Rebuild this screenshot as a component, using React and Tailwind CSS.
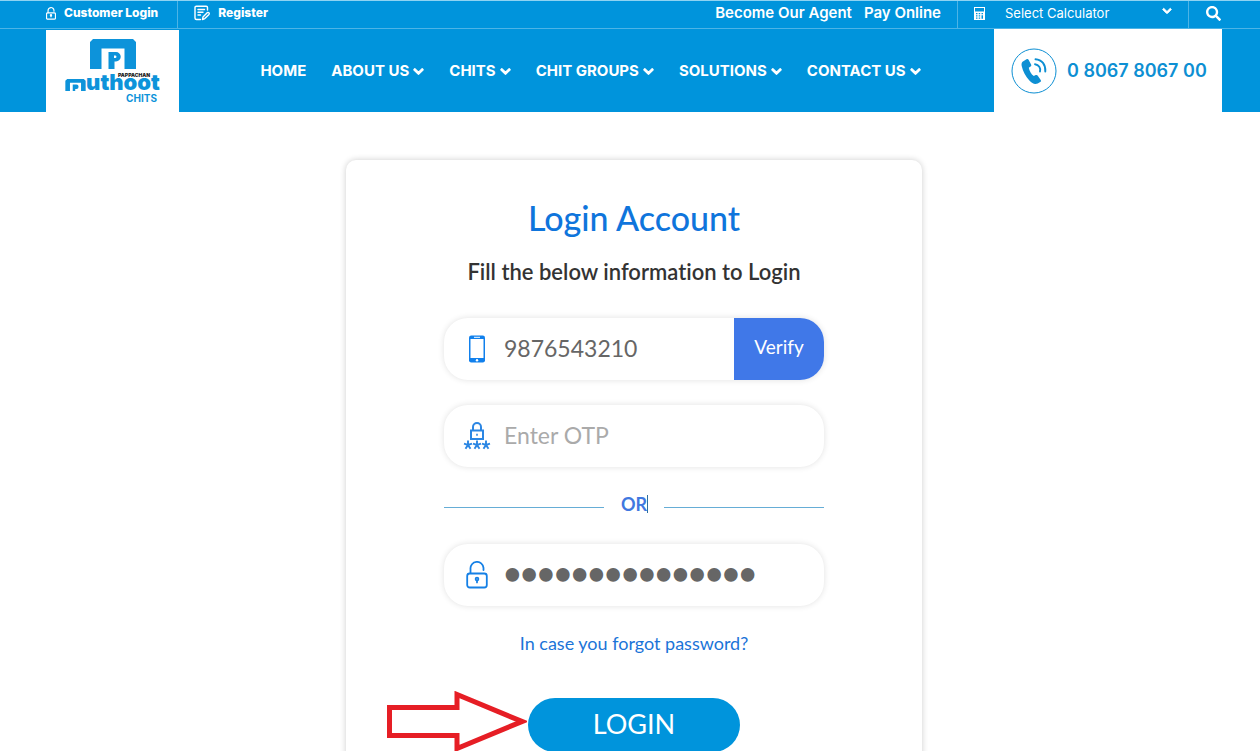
import { useState } from "react";
import { FaChevronDown, FaSearch } from "react-icons/fa";

const menu = [
  { label: "HOME" },
  { label: "ABOUT US", children: true },
  { label: "CHITS", children: true },
  { label: "CHIT GROUPS", children: true },
  { label: "SOLUTIONS", children: true },
  { label: "CONTACT US", children: true },
];

const fieldClass = "flex h-[62px] items-center rounded-[24px] bg-white shadow-[0_0_6px_rgba(0,0,0,0.12)]";

function UnlockIcon({ className }) {
  return (
    <svg viewBox="0 0 22 28" fill="none" stroke="currentColor" strokeLinecap="round" className={className}>
      <path d="M4.5 12V8a6.500 6.500 0 0 1 13-1.200V9" />
      <rect x="1.200" y="12.500" width="19.600" height="14" rx="2.500" />
      <circle cx="11" cy="18" r="1.400" />
      <path d="M11 19.400v2" />
    </svg>
  );
}

function RegisterIcon() {
  return (
    <svg viewBox="0 0 16 16" fill="none" stroke="currentColor" strokeWidth="1.400" strokeLinecap="round" strokeLinejoin="round" className="h-4 w-4">
      <path d="M13.500 5V2.500a1.300 1.300 0 0 0-1.300-1.300H2.300A1.300 1.300 0 0 0 1 2.500V13A1.500 1.500 0 0 0 2.500 14.500h4" />
      <path d="M4 4.500h6.500M4 7.200h5M4 10h2.500" />
      <path d="M8.500 14.500l.5-2.600 4.200-4.200c1.300-.9 2.600.4 1.800 1.700l-4.200 4.200z" />
    </svg>
  );
}

function CalculatorIcon() {
  return (
    <svg viewBox="0 0 11 13" fill="currentColor" className="h-[13px] w-[11px]">
      <path fillRule="evenodd" d="M0 0h11v13H0zM1 1v3.500h9V1zM2 6v1.200h1.500V6zM4.700 6v1.200h1.500V6zM7.500 6v1.200H9V6zM2 8.300v1.200h1.500V8.300zM4.700 8.300v1.200h1.500V8.300zM2 10.500v1.200h1.500v-1.200zM4.700 10.500v1.200h1.500v-1.200zM7.500 8.300v3.400H9V8.300z" />
    </svg>
  );
}

function PhoneIcon() {
  return (
    <svg viewBox="0 0 46 46" fill="none" className="h-[46px] w-[46px] text-[#0d8fd3]">
      <circle cx="23" cy="23" r="22" stroke="currentColor" strokeWidth="1" />
      <path d="M11.500 13.700l4-2.500c1-.5 1.700-.2 2.200.7l2.400 4.500c.4.900.2 1.600-.6 2.100l-1.700 1.200c.5 3.200 2.300 6.300 5 8.400l1.900-1c.9-.4 1.600-.2 2.100.6l2.900 4.200c.5.9.3 1.500-.5 2.100-3.700 3-7.200 2.700-10.800-1.400-3.800-4.400-6.500-9.100-7.700-14.500-.4-2 0-3.500.8-4.400z" fill="currentColor" />
      <path d="M24.500 11.200c6.400.4 10.300 5.400 9.800 12.300M24 16.200c3.800.5 6 3.700 5 7.300" stroke="currentColor" strokeWidth="1.900" strokeLinecap="round" />
    </svg>
  );
}

function MobileIcon() {
  return (
    <svg viewBox="0 0 18 28" className="h-7 w-[18px]">
      <rect x="1" y="0.500" width="16" height="27" rx="2.200" fill="#1180ec" />
      <rect x="2.500" y="4" width="13" height="19" fill="#fff" />
      <path d="M6 2.300h6" stroke="#fff" strokeWidth="1" />
      <circle cx="9" cy="25.200" r="1.200" fill="#fff" />
    </svg>
  );
}

function OtpIcon() {
  return (
    <svg viewBox="0 0 28 28" fill="none" stroke="#2b86e3" strokeWidth="2" className="h-7 w-7 shrink-0">
      <rect x="8" y="8.500" width="12" height="8.500" />
      <path d="M10 8.500V5a4 4 0 0 1 8 0v3.500" />
      <path d="M13.200 12.700h1.600" />
      <path d="M5 18.500V23M1 21.700L5 23l4-1.300M2.500 26.800L5 23l2.500 3.800M14 18.500V23M10 21.700l4 1.300 4-1.300M11.500 26.800L14 23l2.500 3.800M23 18.500V23M19 21.700l4 1.300 4-1.300M20.500 26.800L23 23l2.500 3.800" strokeWidth="1.900" />
    </svg>
  );
}

function Logo() {
  return (
    <a href="#" aria-label="Muthoot Chits" className="flex h-[82px] w-[133px] flex-col items-center bg-white pt-[9px] text-[#0d93da]">
      <svg viewBox="0 0 46 30" fill="currentColor" className="h-[30px] w-[46px]">
        <path d="M3 0h40l3 3v27H34.500V9.500h-23V30H0V3z" />
        <path fillRule="evenodd" d="M18.500 13H26a4.700 4.700 0 0 1 0 9.500h-1.500V30h-6zM24 16.500v2.500h1.200a1.200 1.200 0 0 0 0-2.500z" />
      </svg>
      <span className="self-end pr-[29px] pt-1 font-['Inter'] text-[5px] font-black leading-[5px] text-[#222]">PAPPACHAN</span>
      <span className="flex items-start">
        <svg viewBox="0 0 22 13" fill="currentColor" className="h-[13px] w-[21px] pt-px">
          <path d="M2 0h18l2 2v11h-5V4H5v9H0V2z" />
          <path d="M8 6h4a2.300 2.300 0 0 1 0 4.700h-1.300V13H8z" />
        </svg>
        <span className="font-['Inter'] text-[22px] font-black leading-[9px]">uthoot</span>
      </span>
      <span className="self-end pr-[22px] pt-px font-['Inter'] text-[10px] font-bold leading-3">CHITS</span>
    </a>
  );
}

function Header() {
  return (
    <header className="border-t border-[#8fd3f2] bg-[#0094dc] font-['Inter',sans-serif] text-white">
      <div className="border-b border-[#4db4e6] pl-[46px] pr-[38px]">
        <div className="flex h-[27px] items-stretch">
          <a href="#" className="flex items-center gap-2 border-r border-[#4db4e6] pb-[3px] pr-[19px] text-[12px] font-extrabold">
            <UnlockIcon className="h-[15px] w-[10px] stroke-[2.6]" />
            Customer Login
          </a>
          <a href="#" className="flex items-center gap-2 pb-[3px] pl-4 text-[12px] font-extrabold">
            <RegisterIcon />
            Register
          </a>
          <div className="ml-auto flex items-center gap-3 pb-[3px] pr-4 text-[15px] font-semibold">
            <a href="#">Become Our Agent</a>
            <a href="#">Pay Online</a>
          </div>
          <label className="relative flex w-[232px] items-center border-x border-[#4db4e6] pb-[2px] pl-4">
            <CalculatorIcon />
            <select aria-label="Select Calculator" className="h-full flex-1 appearance-none bg-transparent pl-5 text-[13px] text-white outline-none">
              <option>Select Calculator</option>
            </select>
            <FaChevronDown className="pointer-events-none absolute right-4 top-[5px] h-[10px] w-[10px] stroke-current stroke-[50]" />
          </label>
          <button type="button" aria-label="Search" className="flex items-center pb-[2px] pl-[17px] pr-px">
            <FaSearch className="h-[15px] w-[15px]" />
          </button>
        </div>
      </div>

      <div className="flex items-end justify-between pl-[46px] pr-[38px]">
        <Logo />
        <nav className="flex h-[83px] items-center gap-[25px] pl-2 pt-[2px] text-[15px] font-bold">
          {menu.map((item) => (
            <a key={item.label} href="#" className="flex items-center gap-1">
              {item.label}
              {item.children && <FaChevronDown className="h-[11px] w-[11px] stroke-current stroke-[50]" />}
            </a>
          ))}
        </nav>
        <a href="tel:08067806700" className="flex h-[83px] w-[228px] items-center gap-[10px] bg-white pl-[17px] text-[18px] font-semibold text-[#0d8fd3]">
          <PhoneIcon />
          0 8067 8067 00
        </a>
      </div>
    </header>
  );
}

function PointerArrow() {
  return (
    <svg viewBox="0 0 140 60" fill="none" stroke="#e61e25" strokeWidth="5" className="absolute right-full top-[-7px] mr-px h-[60px] w-[140px]">
      <path d="M2.500 16.500H70V3.500L135 30.500 70 57.500V44.500H2.500z" />
    </svg>
  );
}

function App() {
  const [mobile, setMobile] = useState("9876543210");
  const [otp, setOtp] = useState("");
  const [password, setPassword] = useState("secretpassword1");

  return (
    <div className="h-screen overflow-hidden bg-white">
      <Header />

      <main className="flex justify-center pl-2 pt-12 font-['Lato',sans-serif]">
        <form
          onSubmit={(event) => event.preventDefault()}
          className="flex w-full max-w-[576px] flex-col items-center rounded-[10px] bg-white px-[98px] pb-12 pt-[38px] shadow-[0_0_6px_rgba(0,0,0,0.2)]"
        >
          <h1 className="text-[34px] font-medium leading-10 text-[#0f75dc]">Login Account</h1>
          <p className="mt-[18px] whitespace-nowrap text-[22px] font-semibold leading-8 text-[#333] [font-variant-ligatures:none]">
            Fill the below information to Login
          </p>

          <div className={`${fieldClass} mt-[30px] w-full overflow-hidden`}>
            <label htmlFor="mobile" aria-label="Mobile number" className="ml-5 flex w-[26px] shrink-0 justify-center">
              <MobileIcon />
            </label>
            <input
              id="mobile"
              type="text"
              value={mobile}
              onChange={(event) => setMobile(event.target.value)}
              className="ml-[14px] h-full min-w-0 flex-1 pb-[2px] text-[23px] text-[#666] outline-none"
            />
            <button type="button" className="h-full w-[90px] bg-[#4078e8] pb-1 text-[19px] text-white">Verify</button>
          </div>

          <div className={`${fieldClass} mt-[25px] w-full`}>
            <label htmlFor="otp" aria-label="OTP" className="ml-5 flex w-[26px] shrink-0 justify-center">
              <OtpIcon />
            </label>
            <input
              id="otp"
              type="text"
              value={otp}
              onChange={(event) => setOtp(event.target.value)}
              placeholder="Enter OTP"
              className="ml-[14px] h-full min-w-0 flex-1 pb-[2px] text-[23px] text-[#666] outline-none placeholder:text-[#aaa]"
            />
          </div>

          <div className="mt-[25px] flex w-full items-center gap-4">
            <span className="mt-[6px] h-px flex-1 bg-[#66add6]" />
            <span className="flex w-7 items-center justify-end text-[18px] font-bold leading-6 text-[#4078e0]">
              OR
              <span className="h-[18px] w-px bg-[#2f6f9f]" />
            </span>
            <span className="mt-[6px] h-px flex-1 bg-[#66add6]" />
          </div>

          <div className={`${fieldClass} mt-[28px] w-full`}>
            <label htmlFor="password" aria-label="Password" className="ml-5 flex w-[26px] shrink-0 justify-center">
              <UnlockIcon className="h-7 w-[22px] stroke-[1.8] text-[#1580e6]" />
            </label>
            <input
              id="password"
              type="password"
              value={password}
              onChange={(event) => setPassword(event.target.value)}
              className="ml-[14px] h-full min-w-0 flex-1 pb-[2px] font-['Liberation_Serif'] text-[48px] text-[#666] outline-none [-webkit-text-stroke:2px_#666]"
            />
          </div>

          <a href="#" className="mt-[25px] text-[18px] leading-6 text-[#1b74d8]">In case you forgot password?</a>

          <div className="relative mt-[43px]">
            <PointerArrow />
            <button type="submit" className="h-[54px] w-[212px] rounded-full bg-[#0094dc] pb-[2px] text-[27px] text-white">LOGIN</button>
          </div>
        </form>
      </main>
    </div>
  );
}

export default App;
